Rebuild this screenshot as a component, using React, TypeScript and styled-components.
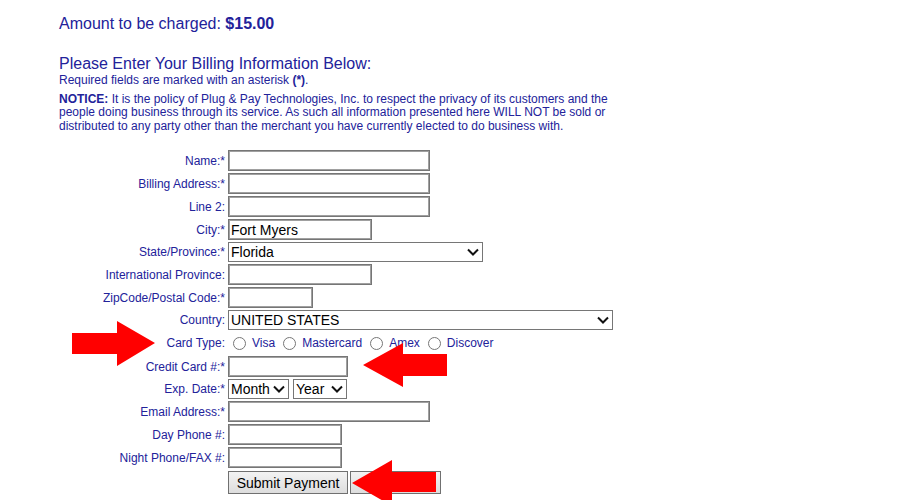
import React from "react";
import styled, { createGlobalStyle } from "styled-components";

const GlobalStyle = createGlobalStyle`
  html, body {
    margin: 0;
    padding: 0;
    background: #ffffff;
    font-family: "Liberation Sans", Arial, sans-serif;
  }
`;

const Page = styled.div`
  position: relative;
  width: 900px;
  height: 500px;
  overflow: hidden;
  color: #22229a;
`;

const Content = styled.div`
  padding: 15px 0 0 59px;
`;

const Amount = styled.div`
  font-size: 16px;
  line-height: 18px;
  margin-bottom: 22px;
`;

const Heading = styled.div`
  font-size: 16px;
  line-height: 18px;
  margin-bottom: 1px;
`;

const Small = styled.p`
  font-size: 12px;
  line-height: 13.5px;
  margin: 0 0 5px 0;
  width: 560px;
`;

const FormGrid = styled.div`
  display: grid;
  grid-template-columns: 166px auto;
  column-gap: 3px;
  row-gap: 2px;
  align-items: center;
  margin-top: 17px;
`;

const Label = styled.label`
  font-size: 12px;
  text-align: right;
  white-space: nowrap;
`;

const Field = styled.div`
  display: flex;
  align-items: center;
  gap: 4px;
  min-height: 20px;
`;

const TextInput = styled.input<{ w: number }>`
  box-sizing: border-box;
  width: ${(p) => p.w}px;
  height: 21px;
  border: 1px solid #767676;
  outline: 1px solid #a0a0a0;
  outline-offset: -2px;
  padding: 0 2px;
  font-family: "Liberation Sans", Arial, sans-serif;
  font-size: 14px;
  color: #000;
  background: #fff;
`;

const SelectWrap = styled.div<{ w: number }>`
  position: relative;
  width: ${(p) => p.w}px;
  height: 20px;
`;

const Select = styled.select`
  appearance: none;
  -webkit-appearance: none;
  box-sizing: border-box;
  width: 100%;
  height: 100%;
  border: 1px solid #767676;
  border-radius: 0;
  padding: 0 0 0 2px;
  font-family: "Liberation Sans", Arial, sans-serif;
  font-size: 14px;
  color: #000;
  background: #fff;
`;

const Chevron = styled.svg`
  position: absolute;
  right: 4px;
  top: 6px;
  pointer-events: none;
`;

const RadioRow = styled.div`
  display: flex;
  align-items: center;
  height: 22px;
  font-size: 12px;
  padding-left: 4px;
`;

const Radio = styled.input`
  width: 13px;
  height: 13px;
  margin: 0 6px 0 1px;
`;

const RadioLabel = styled.span`
  margin-right: 7px;
`;

const Buttons = styled.div`
  display: flex;
  gap: 2px;
  margin-top: 1px;
`;

const Button = styled.button<{ w: number }>`
  box-sizing: border-box;
  width: ${(p) => p.w}px;
  height: 23px;
  border: 1px solid #707070;
  border-radius: 0;
  background: linear-gradient(#f3f3f3, #dddddd);
  font-family: "Liberation Sans", Arial, sans-serif;
  font-size: 14px;
  color: #000;
  padding: 0;
`;

const Overlay = styled.svg`
  position: absolute;
  left: 0;
  top: 0;
  pointer-events: none;
`;

const DropDown = ({ w, value }: { w: number; value: string }) => (
  <SelectWrap w={w}>
    <Select defaultValue={value}>
      <option>{value}</option>
    </Select>
    <Chevron width="12" height="8" viewBox="0 0 12 8">
      <path d="M1 1.5 L6 6.5 L11 1.5" fill="none" stroke="#111" strokeWidth="2" />
    </Chevron>
  </SelectWrap>
);

type Row = { label: string; kind: "text" | "select"; w: number; value?: string };

const rowsTop: Row[] = [
  { label: "Name:*", kind: "text", w: 202 },
  { label: "Billing Address:*", kind: "text", w: 202 },
  { label: "Line 2:", kind: "text", w: 202 },
  { label: "City:*", kind: "text", w: 144, value: "Fort Myers" },
  { label: "State/Province:*", kind: "select", w: 255, value: "Florida" },
  { label: "International Province:", kind: "text", w: 144 },
  { label: "ZipCode/Postal Code:*", kind: "text", w: 85 },
  { label: "Country:", kind: "select", w: 385, value: "UNITED STATES" },
];

const renderRow = (r: Row) => (
  <React.Fragment key={r.label}>
    <Label>{r.label}</Label>
    <Field>
      {r.kind === "text" ? (
        <TextInput w={r.w} defaultValue={r.value || ""} />
      ) : (
        <DropDown w={r.w} value={r.value || ""} />
      )}
    </Field>
  </React.Fragment>
);

const App = () => {
  return (
    <Page>
      <GlobalStyle />
      <Content>
        <Amount>
          Amount to be charged: <b>$15.00</b>
        </Amount>
        <Heading>Please Enter Your Billing Information Below:</Heading>
        <Small>
          Required fields are marked with an asterisk <b>(*)</b>.
        </Small>
        <Small>
          <b>NOTICE:</b> It is the policy of Plug &amp; Pay Technologies, Inc. to respect the privacy of its
          customers and the people doing business through its service. As such all information presented
          here WILL NOT be sold or distributed to any party other than the merchant you have currently
          elected to do business with.
        </Small>

        <FormGrid>
          {rowsTop.map(renderRow)}

          <Label>Card Type:</Label>
          <RadioRow>
            <Radio type="radio" name="card" />
            <RadioLabel>Visa</RadioLabel>
            <Radio type="radio" name="card" />
            <RadioLabel>Mastercard</RadioLabel>
            <Radio type="radio" name="card" />
            <RadioLabel>Amex</RadioLabel>
            <Radio type="radio" name="card" />
            <RadioLabel>Discover</RadioLabel>
          </RadioRow>

          <Label>Credit Card #:*</Label>
          <Field>
            <TextInput w={120} />
          </Field>

          <Label>Exp. Date:*</Label>
          <Field>
            <DropDown w={61} value="Month" />
            <DropDown w={54} value="Year" />
          </Field>

          <Label>Email Address:*</Label>
          <Field>
            <TextInput w={202} />
          </Field>

          <Label>Day Phone #:</Label>
          <Field>
            <TextInput w={114} />
          </Field>

          <Label>Night Phone/FAX #:</Label>
          <Field>
            <TextInput w={114} />
          </Field>

          <span />
          <Buttons>
            <Button w={120}>Submit Payment</Button>
            <Button w={91}>Reset</Button>
          </Buttons>
        </FormGrid>
      </Content>

      <Overlay width="900" height="500" viewBox="0 0 900 500">
        <polygon fill="#ff0000" points="72,333 117,333 117,321 155,343 117,366 117,354 72,354" />
        <polygon fill="#ff0000" points="363,365 403,343 403,354 447,354 447,376 403,376 403,387" />
        <polygon fill="#ff0000" points="352,483 392,460 392,472 436,472 436,492 392,492 392,506" />
      </Overlay>
    </Page>
  );
};

export default App;
